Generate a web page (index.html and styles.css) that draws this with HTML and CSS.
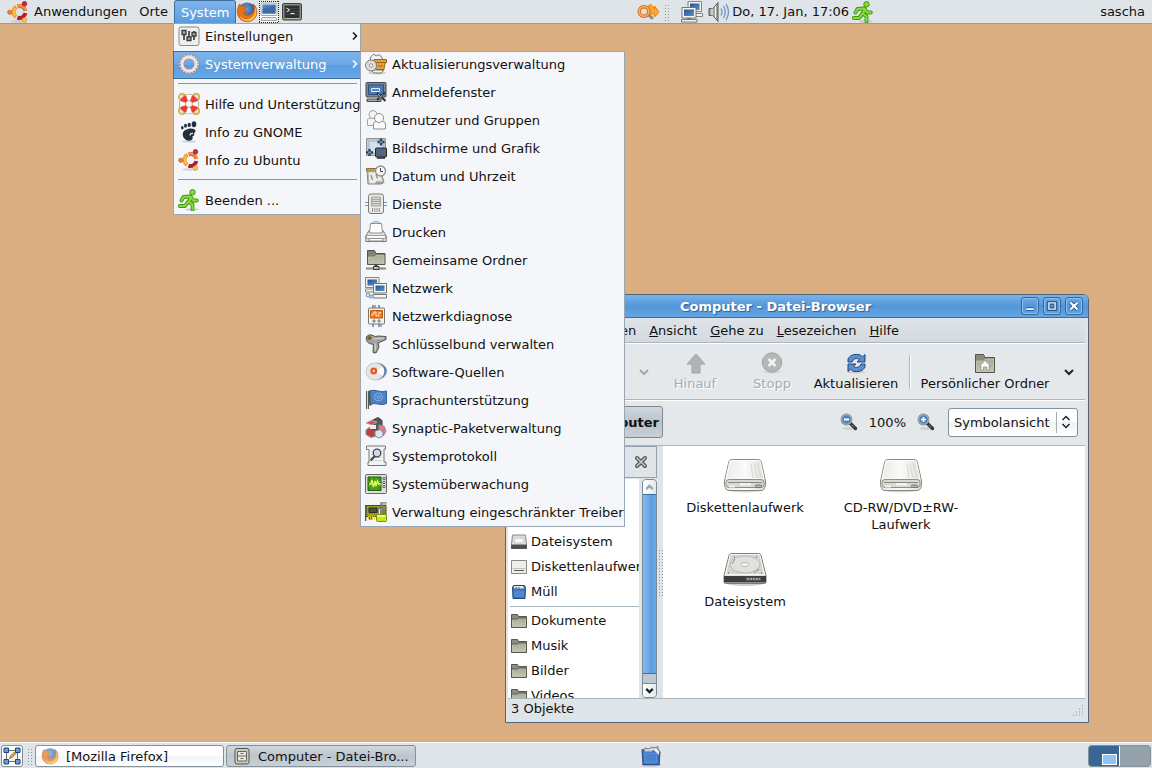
FILE: index.html
```html
<!DOCTYPE html>
<html lang="de">

<head>
    <meta charset="UTF-8">
    <meta name="viewport" content="width=device-width, initial-scale=1.0">
    <title>Desktop</title>
    <link rel="stylesheet" href="styles.css">
</head>

<body>
    <!-- Shared icons and gradients -->
    <svg class="defs" width="0" height="0" aria-hidden="true">
        <defs>
            <linearGradient id="gScreen" x1="0" y1="0" x2="1" y2="1">
                <stop offset="0" stop-color="#24508f" />
                <stop offset="1" stop-color="#5f8fca" />
            </linearGradient>
            <linearGradient id="gDrive" x1="0" y1="0" x2="1" y2="0">
                <stop offset="0" stop-color="#e9eae6" />
                <stop offset="0.5" stop-color="#fbfbfa" />
                <stop offset="1" stop-color="#dcddd8" />
            </linearGradient>
            <linearGradient id="gFolder" x1="0" y1="0" x2="0" y2="1">
                <stop offset="0" stop-color="#a9ac98" />
                <stop offset="1" stop-color="#c2c4b2" />
            </linearGradient>
            <radialGradient id="gFox" cx="0.4" cy="0.35" r="0.7">
                <stop offset="0" stop-color="#6fa8e4" />
                <stop offset="1" stop-color="#163a7c" />
            </radialGradient>
        </defs>
        <symbol id="ubuntu" viewBox="0 0 22 22">
            <ellipse cx="12" cy="20.500" rx="8" ry="1.200" fill="#b9b9b9" opacity="0.6" />
            <g fill="none" stroke-width="4">
                <path d="M10.400 5.400A6 6 0 0 1 18.400 10" stroke="#e8742a" />
                <path d="M18.400 12A6 6 0 0 1 10.400 16.600" stroke="#b81c2c" />
                <path d="M9.100 15.900A6 6 0 0 1 9.500 5.800" stroke="#f0a32c" />
            </g>
            <path d="M10.800 4.700A6.800 6.800 0 0 1 19 9.500" fill="none" stroke="#f7b277" />
            <path d="M8 15A6.800 6.800 0 0 1 8 7" fill="none" stroke="#fbd877" />
            <circle cx="2.800" cy="11.300" r="2.100" fill="#ef8040" stroke="#c85614" stroke-width="0.700" />
            <circle cx="17.500" cy="2.800" r="2.300" fill="#c62840" stroke="#99142b" stroke-width="0.700" />
            <circle cx="17.500" cy="19" r="2.300" fill="#f7c64e" stroke="#d39318" stroke-width="0.700" />
        </symbol>
        <symbol id="firefox" viewBox="0 0 22 22">
            <circle cx="11" cy="11" r="9.500" fill="url(#gFox)" />
            <path d="M3.500 3c-2.500 4-3 9-1 12.500 2.500 5 9 6.500 13.500 4 5-2.800 6.200-9 3.500-14-.7-1.200-1.500-1.800-2.500-2.500 1 2 1.300 3.500 1 5-.3 3-2 5.500-5 6-3 .5-5-.6-5.500-2.500 1.500.2 2.700-.3 3.500-1.500-1.500-.3-2.600-1-2.500-2.500l2-1.500c-1.500-1-3-1-4-.5z" fill="#e8701a" stroke="#b4470b" stroke-width="0.600" />
            <path d="M18.500 5.500c2 5-.5 11-6 12.500-3.500.8-7-.5-9-3.500 2 6 10 7.500 14 3.500 3.500-3.500 3.700-9 1-12.500z" fill="#fbc23a" />
        </symbol>
        <symbol id="runner" viewBox="0 0 22 22">
            <ellipse cx="14" cy="20.500" rx="7" ry="1.200" fill="#b5bbb5" opacity="0.700" />
            <g fill="none" stroke-linecap="round" stroke-linejoin="round">
                <path d="M12.500 7.500L11 13M11.500 7.500L5.500 8 3.500 11.500M13 8l1.800 3.500h4M10.500 12.500L7 17H1.800M11 12.500l3.500 3V20.500" stroke="#3f9410" stroke-width="3.800" />
                <path d="M12.500 7.500L11 13M11.500 7.500L5.500 8 3.500 11.500M13 8l1.800 3.500h4M10.500 12.500L7 17H1.800M11 12.500l3.500 3V20.500" stroke="#86dc3a" stroke-width="2" />
            </g>
            <circle cx="14.500" cy="3.300" r="2.700" fill="#86dc3a" stroke="#3f9410" />
        </symbol>
        <symbol id="screens" viewBox="0 0 22 22">
            <path d="M7 .5h13.500v10H7zM10 12.500h11.500v3H10z" fill="#f1f1ee" stroke="#84867f" />
            <path d="M9 2.500h9.500V9H9z" fill="url(#gScreen)" />
            <path d="M1 6.500h14v10.500H1zM.5 18.500h15.500v2.500H.5z" fill="#f6f6f4" stroke="#74766f" />
            <path d="M3 8.500h10V15H3z" fill="url(#gScreen)" />
            <path d="M6 17.500h4" stroke="#74766f" />
        </symbol>
        <symbol id="folder" viewBox="0 0 16 16">
            <path d="M.5 14.500V1.500h6l1 2h8v11z" fill="#8b8e7a" stroke="#55574c" />
            <path d="M1.500 13.500v-7h5l1.500-1h6.500v8z" fill="url(#gFolder)" stroke="#d6d8ca" stroke-width="0.600" />
            <path d="M1 6h5.500l1.200-1H15" fill="none" stroke="#55574c" />
        </symbol>
        <symbol id="drive" viewBox="0 0 48 48">
            <path d="M4 38c2 4.500 38 4.500 40 0z" fill="#d5d6d3" />
            <path d="M7.500 12c.6-2.600 1.500-3.500 4-3.500h25c2.500 0 3.400.9 4 3.500l4 18c.5 5.500-1 9.500-4.500 9.500H8c-3.500 0-5-4-4.500-9.500z" fill="url(#gDrive)" stroke="#878983" />
            <path d="M8.500 12c.5-2 1-2.500 3-2.500h25c2 0 2.500.5 3 2.500l3.500 16H5z" fill="none" stroke="#fff" />
            <path d="M33 13l3 14M30 13l2 14M36 12l4 15" stroke="#d5dbd0" fill="none" />
            <rect x="5" y="28.500" width="38" height="8" rx="3" fill="#d7dad2" stroke="#8b8e86" />
            <path d="M7 31.500h34" stroke="#85887f" />
            <path d="M19 32h11v2.500H19zM8 34.500h6v2H8z" fill="#f2f3f0" />
            <rect x="34.500" y="34" width="6" height="2.500" rx="1" fill="#b4b9b0" stroke="#74776f" />
        </symbol>
        <symbol id="zoomglass" viewBox="0 0 18 18">
            <ellipse cx="9" cy="15.500" rx="7" ry="1.500" fill="#cdd0d2" />
            <path d="M10.500 10.500l5 5" stroke="#33352f" stroke-width="3.200" stroke-linecap="round" />
            <path d="M12 12l3 3" stroke="#8a8c86" stroke-width="1.200" stroke-dasharray="1 1" />
            <circle cx="6.500" cy="6.500" r="5" fill="#4b83c4" stroke="#80827c" stroke-width="1.800" />
            <circle cx="6.500" cy="6.500" r="4.800" fill="none" stroke="#d9dad6" stroke-width="0.600" />
        </symbol>
        <symbol id="trash" viewBox="0 0 22 22">
            <ellipse cx="11" cy="20" rx="10" ry="1.600" fill="#a9afb3" />
            <path d="M3 6l2-3 4 1 3-2 2 1 4-1.500v3l2 3z" fill="#d3d7d8" stroke="#777a75" />
            <path d="M2 4.500l2.500 1h9l3-2 3.500 3-.8 13H3z" fill="#3871bd" stroke="#234c8a" />
            <path d="M4.500 8h12.500l-.5 10H5z" fill="#4a83cd" stroke="#6e9fde" stroke-width="0.700" />
            <path d="M4.500 5.500h8" stroke="#c9d3dd" stroke-width="2" />
            <path d="M13 5l3-2 3.500 3.500-1 3.500c-1-2-3-4-5.500-5z" fill="#f3f5f7" />
        </symbol>
    </svg>

    <header class="panel panel-top">
        <nav class="panel-menus">
            <button class="panel-menu apps"><svg class="icon22"><use href="#ubuntu" /></svg>Anwendungen</button>
            <button class="panel-menu">Orte</button>
            <button class="panel-menu open" aria-expanded="true">System</button>
        </nav>
        <div class="launchers">
            <button aria-label="Firefox"><svg class="icon22"><use href="#firefox" /></svg></button>
            <button aria-label="Bildschirm">
                <svg class="icon22" viewBox="0 0 22 22">
                    <path d="M1.500 .5h19v21h-19z" fill="#fff" />
                    <path d="M1 .5h20M1 21.500h20M1.500 0v22M20.500 0v22" stroke="#222" stroke-dasharray="1 1" />
                    <rect x="3" y="2" width="16" height="12.500" rx="1" fill="#f3f3f1" stroke="#a4a6a0" />
                    <rect x="4.500" y="3.500" width="13" height="9" fill="#5583bf" />
                    <path d="M4.500 12.500V8l13-4v8.500z" fill="#3c6bac" />
                    <path d="M4 16.500h14l1 3H3z" fill="#eaebe8" stroke="#a4a6a0" />
                </svg>
            </button>
            <button aria-label="Terminal">
                <svg class="icon22" viewBox="0 0 22 22">
                    <rect x="1.500" y="2.500" width="19" height="16.500" rx="1.500" fill="#8b8d87" stroke="#3e403c" />
                    <rect x="3.500" y="4.500" width="15" height="12.500" fill="#2f312e" />
                    <path d="M4 7.500h14M4 10.500h14M4 13.500h14" stroke="#454844" />
                    <path d="M5.500 7l3 2-3 2M9.500 12.500h4" fill="none" stroke="#f2f2f0" />
                    <path d="M3 17.500h16" stroke="#b8bab4" />
                    <path d="M3 17.500h2" stroke="#58c71c" stroke-width="1.500" />
                </svg>
            </button>
        </div>
        <div class="tray">
            <svg class="icon22" viewBox="0 0 22 22">
                <path d="M11 9V5l3-1.500 3.500 4.500v-3l4.500 6-4.500 5v-3h-5z" fill="#f8a833" stroke="#e67e12" />
                <path d="M11 13.500l4 3.500" stroke="#8d8f8a" stroke-width="3" stroke-linecap="round" />
                <circle cx="7" cy="10.500" r="4.800" fill="#f3dcc6" stroke="#c4661c" stroke-width="3.400" />
                <circle cx="7" cy="10.500" r="4.800" fill="none" stroke="#fbb062" stroke-width="1.800" />
            </svg>
            <span class="grip"></span>
            <svg class="icon22 net"><use href="#screens" /></svg>
            <svg class="icon22 sound" viewBox="0 0 22 22">
                <path d="M1 7.500h4L10 1.500v19L5 14.500H1z" fill="#a5a7a2" stroke="#555752" />
                <path d="M4 7.500v7M7.500 5v12" stroke="#f4f4f2" />
                <path d="M13 7.500q2 3.500 0 7M15.500 5q3.500 6 0 12M18 3q5 8 0 16" fill="none" stroke="#6c93c7" stroke-width="1.300" />
            </svg>
            <time>Do, 17. Jan, 17:06</time>
            <button aria-label="Beenden"><svg class="icon22"><use href="#runner" /></svg></button>
        </div>
        <span class="user">sascha</span>
    </header>

    <main class="desktop">
        <section class="window">
            <div class="titlebar">
                <h1>Computer - Datei-Browser</h1>
                <div class="window-buttons">
                    <button aria-label="Minimieren"><svg viewBox="0 0 18 18"><path d="M5 12.500h8" stroke="#285a8f" stroke-width="4" /><path d="M5 12.500h8" stroke="#fff" stroke-width="2" /></svg></button>
                    <button aria-label="Maximieren"><svg viewBox="0 0 18 18"><path d="M5.500 5.500h7v7h-7z" fill="none" stroke="#285a8f" stroke-width="4" /><path d="M5.500 5.500h7v7h-7z" fill="none" stroke="#e4effa" stroke-width="1.600" /></svg></button>
                    <button aria-label="Schließen"><svg viewBox="0 0 18 18"><path d="M5 5l8 8M13 5l-8 8" stroke="#285a8f" stroke-width="4.400" /><path d="M5 5l8 8M13 5l-8 8" stroke="#fff" stroke-width="2.400" /></svg></button>
                </div>
            </div>

            <nav class="menubar">
                <a href="#"><u>D</u>atei</a>
                <a href="#"><u>B</u>earbeiten</a>
                <a href="#"><u>A</u>nsicht</a>
                <a href="#"><u>G</u>ehe zu</a>
                <a href="#"><u>L</u>esezeichen</a>
                <a href="#"><u>H</u>ilfe</a>
            </nav>

            <div class="toolbar">
                <button class="tool back" disabled><svg class="icon22" viewBox="0 0 22 22"><path d="M1 11l9-9v5h10v8H10v5z" fill="#b4b7b9" /></svg>Zurück</button>
                <button class="drop" aria-label="Zurück-Verlauf" disabled><svg viewBox="0 0 12 12"><path d="M2 4l4 4 4-4" /></svg></button>
                <button class="tool forward" disabled><svg class="icon22" viewBox="0 0 22 22"><path d="M21 11l-9-9v5H2v8h10v5z" fill="#b4b7b9" /></svg>Vor</button>
                <button class="drop" aria-label="Vor-Verlauf" disabled><svg viewBox="0 0 12 12"><path d="M2 4l4 4 4-4" /></svg></button>
                <button class="tool up" disabled><svg class="icon22" viewBox="0 0 22 22"><path d="M12 2l9 10h-5v9H8v-9H3z" fill="#b1b3b4" stroke="#a0a3a5" /></svg>Hinauf</button>
                <button class="tool stop" disabled>
                    <svg class="icon22" viewBox="0 0 22 22">
                        <ellipse cx="11" cy="20" rx="9" ry="1.500" fill="#d2d6d9" />
                        <circle cx="11" cy="10.500" r="9.700" fill="#b5b6b6" stroke="#a2a4a5" />
                        <path d="M7.500 7l7 7M14.500 7l-7 7" stroke="#f3f4f5" stroke-width="2.600" />
                    </svg>Stopp
                </button>
                <button class="tool reload">
                    <svg class="icon22" viewBox="0 0 22 22">
                        <ellipse cx="11" cy="20" rx="9" ry="1.500" fill="#ccd0d3" />
                        <path d="M3 10V7c2-4 6-5 10-4.500 2 .2 3.500 1 4.500 2.200L20 2.500V10h-8l2.500-2.500c-3-1.800-6-1-7.500 2.500z" fill="#5c8fcc" stroke="#1f4581" />
                        <path d="M20 12v3c-2 4-6 5-10 4.500-2-.2-3.500-1-4.500-2.200L3 19.500V12h8l-2.500 2.500c3 1.800 6 1 7.500-2.500z" fill="#5c8fcc" stroke="#1f4581" />
                    </svg>Aktualisieren
                </button>
                <span class="tool-separator"></span>
                <button class="tool home">
                    <svg class="icon22" viewBox="0 0 22 22">
                        <path d="M1.500 20.500V2.500h8l1.500 3h9.500v15z" fill="#888b77" stroke="#55574c" />
                        <path d="M2.500 19.500V9h7l2-2h8v12.500z" fill="url(#gFolder)" stroke="#d6d8ca" stroke-width="0.600" />
                        <path d="M11 8.500l5.500 5.500H15v4h-2.500v-3h-3v3H7v-4H5.500z" fill="#fbfbf9" stroke="#7c7f6c" stroke-width="0.600" />
                    </svg>Persönlicher Ordner
                </button>
                <button class="drop more" aria-label="Mehr"><svg viewBox="0 0 12 12"><path d="M2 4l4 4 4-4" /></svg></button>
            </div>

            <div class="locationbar">
                <div class="pathbar">
                    <button class="edit" aria-label="Adresse eingeben"></button>
                    <button class="path">Computer</button>
                </div>
                <button class="zoom" aria-label="Verkleinern"><svg viewBox="0 0 18 18"><use href="#zoomglass" /><path d="M4 6.500h5" stroke="#fff" stroke-width="2" /></svg></button>
                <span class="zoom-level">100%</span>
                <button class="zoom" aria-label="Vergrößern"><svg viewBox="0 0 18 18"><use href="#zoomglass" /><path d="M4 6.500h5M6.500 4v5" stroke="#fff" stroke-width="1.600" /></svg></button>
                <div class="view-select">
                    <select aria-label="Ansicht">
                        <option>Symbolansicht</option>
                        <option>Listenansicht</option>
                    </select>
                    <svg viewBox="0 0 12 14"><path d="M2.500 5L6 1.500 9.500 5M2.500 9L6 12.500 9.500 9" fill="none" stroke="#222" stroke-width="1.500" /></svg>
                </div>
            </div>

            <div class="browser">
                <aside class="sidebar">
                    <div class="sidebar-head">
                        <button aria-label="Seitenleiste schließen"><svg viewBox="0 0 14 14"><path d="M3 3l8 8M11 3l-8 8" stroke="#55585a" stroke-width="4" stroke-linecap="round" /><path d="M3 3l8 8M11 3l-8 8" stroke="#c6c9cb" stroke-width="1.600" stroke-linecap="round" /></svg></button>
                    </div>
                    <div class="places-wrap">
                        <ul class="places">
                            <li><svg><use href="#folder" /></svg>sascha</li>
                            <li><svg><use href="#folder" /></svg>Schreibtisch</li>
                            <li>
                                <svg viewBox="0 0 16 16"><path d="M1.500 1h13l1 9v4.500H.5V10z" fill="#dcddda" stroke="#888a85" /><ellipse cx="8" cy="6.500" rx="5" ry="2.500" fill="#f8f8f6" stroke="#b5b7b2" stroke-width="0.600" /><path d="M.5 11h15v3.500H.5z" fill="#4b4e4b" stroke="#555" /></svg>Dateisystem
                            </li>
                            <li>
                                <svg viewBox="0 0 16 16"><path d="M.5 1.500h15v13H.5z" fill="#eeefec" stroke="#888a85" /><path d="M1.500 9.500h13" stroke="#c1c3be" /><path d="M3 11.500h10" stroke="#555752" /></svg>Diskettenlaufwerk
                            </li>
                            <li><svg viewBox="0 0 16 16"><path d="M2.500 1.500h11l1 2-.5 11H2l-.5-11z" fill="#3b76c2" stroke="#1f4786" /><path d="M3 2h9l1 2.500H3z" fill="#e7eaee" /><path d="M5 5V3M8 5V3" stroke="#555" /><path d="M3 7h10v6H3z" fill="#4f88d0" /></svg>Müll</li>
                            <li class="place-separator"></li>
                            <li><svg><use href="#folder" /></svg>Dokumente</li>
                            <li><svg><use href="#folder" /></svg>Musik</li>
                            <li><svg><use href="#folder" /></svg>Bilder</li>
                            <li><svg><use href="#folder" /></svg>Videos</li>
                        </ul>
                        <div class="scrollbar">
                            <button class="scroll-up" aria-label="Nach oben"><svg viewBox="0 0 12 12"><path d="M3 7.500l3-3 3 3" stroke="#9aa5ad" /></svg></button>
                            <div class="thumb"></div>
                            <button class="scroll-down" aria-label="Nach unten"><svg viewBox="0 0 12 12"><path d="M3 4.500l3 3 3-3" stroke="#222" /></svg></button>
                        </div>
                    </div>
                </aside>
                <div class="splitter"><span class="grip"></span></div>
                <ul class="files">
                    <li><svg><use href="#drive" /></svg>Diskettenlaufwerk</li>
                    <li><svg><use href="#drive" /></svg>CD-RW/DVD±RW-<br>Laufwerk</li>
                    <li>
                        <svg viewBox="0 0 48 48">
                            <path d="M4 38c3 4 37 4 40 0z" fill="#d0d1cf" />
                            <path d="M8 10.500c.3-1.300 1-2 2.500-2h27c1.500 0 2.200.7 2.500 2l5 20v6.500c0 1-.5 1.500-1.500 1.500h-39c-1 0-1.500-.5-1.500-1.500v-6.500z" fill="#e2e3df" stroke="#7b7e78" />
                            <path d="M9 11c.2-1 .7-1.500 1.500-1.500h27c.8 0 1.300.5 1.500 1.500l4.500 18.500H4.500z" fill="#d3d5d0" stroke="#f7f7f5" />
                            <ellipse cx="24" cy="19.500" rx="15" ry="8.500" fill="#dfe1dc" stroke="#b9bcb5" />
                            <ellipse cx="24" cy="19.500" rx="4" ry="2" fill="#f7f8f5" stroke="#b5b8b0" />
                            <path d="M14 14l-3 5M33 28l5-4" stroke="#90938c" />
                            <path d="M13 12h1M35 12h1M7 28h1M40 28h1" stroke="#7a7d76" stroke-width="1.500" />
                            <path d="M3 31h42v6.500H3z" fill="#3c403d" />
                            <path d="M25 32.500h15v3H25z" fill="#5e625e" />
                            <path d="M26 34h13" stroke="#d8dad5" stroke-dasharray="2 1" />
                        </svg>Dateisystem
                    </li>
                </ul>
            </div>

            <footer class="statusbar">
                <span>3 Objekte</span>
                <svg viewBox="0 0 12 12"><path d="M10 1h1M7 4h1M10 4h1M4 7h1M7 7h1M10 7h1M1 10h1M4 10h1M7 10h1M10 10h1" stroke="#8d99a1" /></svg>
            </footer>
        </section>
    </main>

    <ul class="menu system-menu">
        <li>
            <svg class="icon22" viewBox="0 0 22 22">
                <rect x="1" y="2" width="20" height="18.500" rx="2" fill="#eeeeec" stroke="#888a85" />
                <path d="M6 6v9M11 6v9M16 6v9" stroke="#555752" stroke-width="2" />
                <path d="M4 5.500h4v4H4zM9 12h4v3.500H9zM14 7.500h4V11h-4z" fill="#a9aba6" stroke="#3c3e3a" stroke-width="1.300" />
            </svg>Einstellungen<span class="arrow"><svg viewBox="0 0 8 12"><path d="M2 2.500L5.500 6 2 9.500" /></svg></span>
        </li>
        <li class="selected">
            <svg class="icon22" viewBox="0 0 22 22">
                <circle cx="11" cy="11" r="9" fill="none" stroke="#8f8586" stroke-width="3.400" stroke-dasharray="1.700 1.440" />
                <circle cx="11" cy="11" r="7" fill="none" stroke="#a39090" stroke-width="4.200" />
                <circle cx="11" cy="11" r="7" fill="none" stroke="#f1e4e3" stroke-width="2.800" />
                <circle cx="11" cy="11" r="9" fill="none" stroke="#e6dada" stroke-width="1.800" stroke-dasharray="1.300 1.840" />
            </svg>Systemverwaltung<span class="arrow"><svg viewBox="0 0 8 12"><path d="M2 2.500L5.500 6 2 9.500" /></svg></span>
        </li>
        <li class="separator"></li>
        <li>
            <svg class="icon22" viewBox="0 0 22 22">
                <g fill="none" stroke="#b8941d" stroke-width="1.800"><circle cx="4" cy="4" r="3" /><circle cx="18" cy="4" r="3" /><circle cx="4" cy="18" r="3" /><circle cx="18" cy="18" r="3" /></g>
                <g fill="none" stroke="#f5e07a" stroke-width="0.800"><circle cx="4" cy="4" r="3" /><circle cx="18" cy="4" r="3" /><circle cx="4" cy="18" r="3" /><circle cx="18" cy="18" r="3" /></g>
                <circle cx="11" cy="11" r="6.500" fill="none" stroke="#8a8c86" stroke-width="7" />
                <circle cx="11" cy="11" r="6.500" fill="none" stroke="#fafaf9" stroke-width="5.800" />
                <path d="M4.900 8.900a6.500 6.500 0 0 1 4-4M13.100 4.900a6.500 6.500 0 0 1 4 4M17.100 13.100a6.500 6.500 0 0 1-4 4M8.900 17.100a6.500 6.500 0 0 1-4-4" fill="none" stroke="#ee3b2c" stroke-width="5.800" />
            </svg>Hilfe und Unterstützung
        </li>
        <li>
            <svg class="icon22" viewBox="0 0 22 22">
                <ellipse cx="11" cy="20.500" rx="7" ry="1" fill="#cdd1d4" />
                <g fill="#20303c"><ellipse cx="4.300" cy="6.800" rx="1.300" ry="1.700" /><ellipse cx="7.500" cy="4.800" rx="1.500" ry="2" /><ellipse cx="11.200" cy="3.900" rx="1.600" ry="2.200" /><ellipse cx="16" cy="3.300" rx="2.300" ry="3" /></g>
                <path d="M10 8c3.500-1 7 0 7.500 1.500.4 1.500-1.200 2-1.500 3.500.5 1 .2 2-.8 2-1-.2-.7 1-.5 1.800.2 2-2 3-4 2.900-3-.2-6-3-6-6.500C4.700 10.500 7 8.700 10 8z" fill="#20303c" />
                <path d="M15 12.500c-2-.5-3 .6-2.800 2" fill="none" stroke="#e8ecef" stroke-width="1.300" />
            </svg>Info zu GNOME
        </li>
        <li><svg class="icon22"><use href="#ubuntu" /></svg>Info zu Ubuntu</li>
        <li class="separator"></li>
        <li><svg class="icon22"><use href="#runner" /></svg>Beenden ...</li>
    </ul>

    <ul class="menu admin-menu">
        <li>
            <svg class="icon22" viewBox="0 0 22 22">
                <ellipse cx="12" cy="20" rx="9" ry="1.600" fill="#cfd1cc" />
                <path d="M5 5q4-6 6-2 4-3 6 2l3 3H6zM6 17h13l-3 3H9z" fill="#f2f2f0" stroke="#777974" />
                <path d="M9 6.500h12.500v3L20 10l-1 6.500h-8L9.500 10z" fill="#e6a13a" stroke="#a0651a" />
                <path d="M9 9.500h12M13 13h5" stroke="#a0651a" />
                <circle cx="6" cy="12.500" r="5.500" fill="#dcdedb" stroke="#777974" />
                <circle cx="6" cy="12.500" r="1.700" fill="#fff" stroke="#8f918c" />
            </svg>Aktualisierungsverwaltung
        </li>
        <li>
            <svg class="icon22" viewBox="0 0 22 22">
                <rect x="1" y="1.500" width="20" height="14.500" rx="1" fill="#7e878f" stroke="#454c52" />
                <rect x="3.500" y="4" width="15" height="9.500" fill="#4b7cb8" stroke="#2f5380" />
                <path d="M6.500 7.500h8v3h-8z" fill="#5a8bc6" stroke="#dfe9f4" />
                <path d="M2 18h14v2.500H2z" fill="#a5abb0" stroke="#42484d" />
                <path d="M12 12l8.500 8M20 11.500L12 19" stroke="#2f3438" stroke-width="2.200" />
                <path d="M13 13l3 3M18 13.500l-4 4" stroke="#aeb4b8" />
            </svg>Anmeldefenster
        </li>
        <li>
            <svg class="icon22" viewBox="0 0 22 22">
                <g fill="#f5f5f3" stroke="#a3a5a0"><path d="M2.500 16.500V11q0-2 3-2h6q2 0 2.500 2v5.500z" /><circle cx="8" cy="5.500" r="4" /></g>
                <g fill="#fbfbfa" stroke="#8f918c"><path d="M8.500 20v-5q0-2.500 3-2.500h6q3 0 3 2.500v5z" /><circle cx="14" cy="9" r="4.500" /></g>
            </svg>Benutzer und Gruppen
        </li>
        <li>
            <svg class="icon22" viewBox="0 0 22 22">
                <path d="M1.500 1.500h19v17h-19z" fill="#c3c8cc" stroke="#8e9397" />
                <path d="M4 4h14v12H4z" fill="#d4e0ed" stroke="#a9b6c2" />
                <path d="M16 1.500v7M12.500 5h7M4.500 12v7M1 15.500h7" stroke="#2e3f50" stroke-width="2.400" />
                <path d="M14.500 5h3M3 15.500h3" stroke="#6a93bd" stroke-width="2" />
                <rect x="10.500" y="11" width="11" height="9" rx="1" fill="#5d656c" stroke="#22272b" />
                <path d="M12.500 13.500h6.500v4h-6.500z" fill="#45699a" />
                <path d="M12 21h8" stroke="#22272b" stroke-width="1.500" />
            </svg>Bildschirme und Grafik
        </li>
        <li>
            <svg class="icon22" viewBox="0 0 22 22">
                <path d="M2 4l13-.5 4 14-3 1.500H3z" fill="#a5a69c" stroke="#83857e" />
                <path d="M1.500 3.500h13v2.500h-13z" fill="#c4a862" stroke="#86713a" />
                <path d="M3 7l12-.5 3 10.500-6-1-2 2.500H4z" fill="#ededeb" stroke="#b3b5b0" />
                <path d="M6 10l1.500 5M11 9.500l1.500 4" stroke="#8d8f8a" stroke-width="1.300" />
                <circle cx="15.500" cy="6" r="5" fill="#f7f7f6" stroke="#90928c" stroke-width="1.300" />
                <path d="M15.500 3v3.500h2.500" fill="none" stroke="#444" />
            </svg>Datum und Uhrzeit
        </li>
        <li>
            <svg class="icon22" viewBox="0 0 22 22">
                <path d="M0 9.500h22M0 12.500h22" stroke="#6e97c6" />
                <rect x="3.500" y="1" width="15" height="19.500" rx="2.500" fill="#ecedeb" stroke="#777974" />
                <path d="M6.500 4h9v9h-9z" fill="#d1d3cf" stroke="#a1a39e" />
                <path d="M7 6.500h8M7 8.500h8M7 10.500h8" stroke="#a8aaa5" />
                <path d="M7.500 15v4M9.800 15v4M12.100 15v4M14.400 15v4" stroke="#8f918c" />
            </svg>Dienste
        </li>
        <li>
            <svg class="icon22" viewBox="0 0 22 22">
                <path d="M7 1.500q4-2 8 0" fill="none" stroke="#7aa5d8" />
                <path d="M.8 15L4 9.500h14l3.200 5.500v5.500H.8z" fill="#e6e7e4" stroke="#777974" />
                <path d="M5.500 2.500h11l1 9.500h-13z" fill="#fdfdfd" stroke="#8f918c" />
                <path d="M1.500 14.500h19v3h-19z" fill="#f8f8f7" stroke="#9c9e99" />
                <path d="M4 17.500h14v2.500H4z" fill="#fff" stroke="#898b86" />
            </svg>Drucken
        </li>
        <li>
            <svg class="icon22" viewBox="0 0 22 22">
                <path d="M2.500 15.500V1.500h7l1.500 3h9v11z" fill="#80836f" stroke="#55574c" />
                <path d="M3.500 14.500V8h6l1.500-1.500h8v8z" fill="url(#gFolder)" stroke="#d2d4c5" stroke-width="0.600" />
                <path d="M11 15v3.500" stroke="#44463f" stroke-width="3" />
                <path d="M1 19.500h20" stroke="#888a85" stroke-width="2" />
                <path d="M8.500 17.500h5.500v3H8.500z" fill="#bfc1ba" stroke="#33352f" />
            </svg>Gemeinsame Ordner
        </li>
        <li>
            <svg class="icon22" viewBox="0 0 22 22">
                <path d="M.5.500h13.500v10H.5zM.5 12h9v3h-9z" fill="#f1f1ee" stroke="#84867f" />
                <path d="M2.500 2.500H12v6H2.500z" fill="url(#gScreen)" />
                <path d="M8.500 6.500h13V16h-13zM8 17.500h13.500V21H8z" fill="#f6f6f4" stroke="#74766f" />
                <path d="M10.500 8.500h9V14h-9z" fill="url(#gScreen)" />
                <circle cx="3" cy="18" r="1.700" fill="none" stroke="#7aa5d8" stroke-width="1.300" /><path d="M5 18.500h3M4 20.500h3" stroke="#7aa5d8" stroke-width="1.300" />
            </svg>Netzwerk
        </li>
        <li>
            <svg class="icon22" viewBox="0 0 22 22">
                <path d="M8 0v3M8 19v3M14 0v3M14 19v3" stroke="#5a86c2" stroke-width="1.600" />
                <path d="M10 0v3M16 19v3" stroke="#a0629b" stroke-width="1.200" />
                <rect x="3.500" y="3" width="16" height="16" rx="1" fill="#f1f1ef" stroke="#777974" />
                <path d="M5.500 5.500h12v7.500h-12z" fill="#ee7a18" stroke="#c65a06" />
                <path d="M7 11V9h2V7h2v4h3V7.500h2" fill="none" stroke="#ffe6c4" />
                <circle cx="9" cy="16" r="1.200" fill="#bbb" stroke="#666" stroke-width="0.700" /><circle cx="14" cy="16" r="1.200" fill="#bbb" stroke="#666" stroke-width="0.700" />
            </svg>Netzwerkdiagnose
        </li>
        <li>
            <svg class="icon22" viewBox="0 0 22 22">
                <path d="M1.500 3.500q3-3 6.500-1 2 2 5 .5l8 .5v3L13 10l1 4-3 6-3-.5.500-8-4-1q-4-2-3-7z" fill="#a1a39e" stroke="#50524d" />
                <circle cx="4.500" cy="5" r="1.800" fill="#57594f" stroke="#8f7530" />
                <path d="M8 6l11-1M10 10.500l.5 7" stroke="#dcddda" />
            </svg>Schlüsselbund verwalten
        </li>
        <li>
            <svg class="icon22" viewBox="0 0 22 22">
                <path d="M12 2q9.500 1.500 9.500 8T12 19q6-4 6-9t-6-8z" fill="#5580ba" stroke="#7d8794" stroke-width="0.700" />
                <ellipse cx="10" cy="10.500" rx="9" ry="8.500" fill="#e5e6e5" stroke="#c6c8c6" />
                <path d="M10 10.500L18 6q2 4 0 8.500z" fill="#f9fafa" />
                <circle cx="8.500" cy="10" r="4" fill="#f4c4ae" />
                <circle cx="8.800" cy="10" r="2.300" fill="none" stroke="#dc5325" stroke-width="1.800" />
            </svg>Software-Quellen
        </li>
        <li>
            <svg class="icon22" viewBox="0 0 22 22">
                <path d="M2.500 2v18" stroke="#555752" stroke-width="3" />
                <path d="M2.500 2v18" stroke="#d3d5d0" />
                <path d="M4 2q5-1.500 9 0t8.500 0v12.500q-4 2-8.500.5T5 16z" fill="#4b82c5" stroke="#30609c" />
                <circle cx="13.500" cy="8" r="4" fill="none" stroke="#86afdf" /><circle cx="13.500" cy="8" r="1.500" fill="none" stroke="#86afdf" />
                <path d="M5 3v14" stroke="#4a4c48" />
            </svg>Sprachunterstützung
        </li>
        <li>
            <svg class="icon22" viewBox="0 0 22 22">
                <path d="M1 13l4-3 6 3v6l-5 1.500-5-3z" fill="#bf4040" stroke="#8d8f8b" />
                <path d="M6 4l7-3.500 4 3v8l-6 2-5-2z" fill="#55595b" stroke="#3b3e40" />
                <path d="M1 6l5-2.500L12 5l-5 3z" fill="#df4b3c" stroke="#aaa" />
                <path d="M5 8h6v4H5z" fill="#eceded" />
                <path d="M14 8l5 1 2 5-2 4-5 1z" fill="#dc7d86" stroke="#9b8f91" />
                <path d="M10 14l5-1.500 3 2.500v4l-4 2-4-2z" fill="#dfe6ef" stroke="#7e8894" />
            </svg>Synaptic-Paketverwaltung
        </li>
        <li>
            <svg class="icon22" viewBox="0 0 22 22">
                <path d="M1.500 1h19v3H19v13h2v3.500H3V17h1V4.500H1.500z" fill="#f3f3f1" stroke="#777974" />
                <path d="M6 6.500h11M6 9.500h11M6 12.500h11M6 15.500h11" stroke="#d3d5d1" />
                <path d="M5.500 15.500L10 11" stroke="#44463f" stroke-width="2.200" />
                <circle cx="12" cy="8" r="3.800" fill="#cddcee" stroke="#44484d" stroke-width="1.300" />
            </svg>Systemprotokoll
        </li>
        <li>
            <svg class="icon22" viewBox="0 0 22 22">
                <rect x="0.500" y="1.500" width="21" height="19" rx="1" fill="#dfe0dd" stroke="#666863" />
                <path d="M3 4h13v13.500H3z" fill="#3c9a12" stroke="#23560b" />
                <path d="M7 4v13.500M11 4v13.500M3 8.500h13M3 13h13" stroke="#5fb52f" stroke-width="0.800" />
                <path d="M4 11h2l1-4 1.500 7 1.500-6 1 5 1.500-5 1 3H16" fill="none" stroke="#e4ff5a" stroke-width="1.300" />
                <g fill="#fafafa" stroke="#444" stroke-width="0.900"><circle cx="19" cy="5.500" r="1.200" /><circle cx="19" cy="9.500" r="1.200" /><circle cx="19" cy="13.500" r="1.200" /></g>
            </svg>Systemüberwachung
        </li>
        <li>
            <svg class="icon22" viewBox="0 0 22 22">
                <path d="M1 4.500h20v11H7V18H4v-2.500H1z" fill="#95a021" stroke="#4b510f" />
                <path d="M.5 4v16" stroke="#53564e" stroke-width="1.600" />
                <path d="M4 7h8v4.500H4z" fill="#4b4e49" stroke="#282a27" />
                <path d="M3 16.500h8" stroke="#dfc535" stroke-width="4" stroke-dasharray="1 1" />
                <path d="M14.500 14V8q0-2 2-2V2.500h5M18.500 14V7" fill="none" stroke="#777974" stroke-width="2.400" />
                <path d="M17 3h4.500M14.500 13V8" stroke="#eeeeec" />
                <rect x="11.500" y="13.500" width="10" height="7" rx="1" fill="#c8e61e" stroke="#7a9207" />
                <path d="M12.500 15h8" stroke="#f4ff9f" stroke-width="1.500" />
            </svg>Verwaltung eingeschränkter Treiber
        </li>
    </ul>

    <footer class="panel panel-bottom">
        <button class="show-desktop" aria-label="Schreibtisch anzeigen">
            <svg viewBox="0 0 18 18">
                <path d="M3.500 3.500h11v11h-11z" fill="#f2f3ee" stroke="#6e7168" />
                <path d="M1 1h4.500v4.500H1zM12.500 1H17v4.500h-4.500zM1 12.500h4.500V17H1zM12.500 12.500H17V17h-4.500z" fill="#6f9bd1" stroke="#1f4580" />
                <path d="M6.500 11.500l1-2.500 4-4 1.500 1.500-4 4z" fill="#eba53a" stroke="#6b5230" stroke-width="0.700" />
            </svg>
        </button>
        <span class="grip"></span>
        <button class="task"><svg class="faded"><use href="#firefox" /></svg><span>[Mozilla Firefox]</span></button>
        <button class="task active">
            <svg viewBox="0 0 18 18">
                <rect x="2" y="1.500" width="14" height="15.500" rx="2" fill="#c9cbc1" stroke="#55574e" />
                <path d="M4.500 4.500h9v9.500h-9z" fill="#e8e9e2" stroke="#66685f" />
                <path d="M4.500 9h9M7.500 6.500h3M7.500 11.500h3" stroke="#66685f" />
            </svg>
            <span>Computer - Datei-Bro...</span>
        </button>
        <button class="trash" aria-label="Müll"><svg class="icon22"><use href="#trash" /></svg></button>
        <div class="pager">
            <div class="workspace current"><span class="mini"></span></div>
            <div class="workspace"></div>
        </div>
    </footer>
</body>

</html>
```
FILE: styles.css
```css
* {
    box-sizing: border-box;
}

body {
    display: flex;
    flex-direction: column;
    height: 100vh;
    margin: 0;
    overflow: hidden;
    font-family: "DejaVu Sans", Verdana, sans-serif;
    font-size: 13px;
    line-height: 17px;
    color: #111;
    background-color: #dbae82;
}

ul {
    list-style: none;
    margin: 0;
    padding: 0;
}

button,
select {
    font: inherit;
    color: inherit;
    background: none;
    border: none;
    margin: 0;
    padding: 0;
}

svg {
    display: block;
    flex: none;
}

.defs {
    position: absolute;
}

.icon22 {
    width: 22px;
    height: 22px;
}

.grip {
    flex: none;
    background-image: linear-gradient(90deg, #dfe4e8 2px, transparent 2px), linear-gradient(#dfe4e8 2px, #8d99a1 2px);
    background-size: 3px 3px;
}

/* Panels */
.panel {
    display: flex;
    align-items: center;
    flex: none;
    background-color: #dfe4e8;
}

.panel-top {
    height: 24px;
    border-bottom: 1px solid #879fac;
}

.panel-menus,
.launchers,
.tray {
    display: flex;
    align-items: center;
}

.panel-menu {
    display: flex;
    align-items: center;
    height: 23px;
    padding: 0 6px;
}

.panel-menu.apps {
    gap: 5px;
    padding-left: 7px;
}

.panel-menu.open {
    color: #fff;
    background: linear-gradient(#7fb5ec, #5a9ce0);
    border: 1px solid #3e6e9d;
    border-bottom: none;
    border-radius: 3px 3px 0 0;
    padding: 0 6px;
}

.launchers button:last-child {
    margin-left: 1px;
}

.tray {
    margin-left: auto;
    margin-right: 226px;
}

.tray .grip {
    width: 6px;
    height: 18px;
    margin: 0 12px 0 4px;
}

.tray .sound {
    margin: 0 2px 0 5px;
}

.tray time {
    margin-right: 3px;
}

.user {
    margin-right: 7px;
}

/* Menus */
.menu {
    position: absolute;
    background-color: #f4f6f9;
    box-shadow: inset 0 0 0 1px #98a7b3;
}

.system-menu {
    top: 23px;
    left: 173px;
    width: 188px;
}

.admin-menu {
    top: 51px;
    left: 360px;
    width: 265px;
}

.menu li {
    display: flex;
    align-items: center;
    gap: 5px;
    height: 28px;
    padding: 0 5px 2px;
    white-space: nowrap;
}

.menu .selected {
    color: #fff;
    background: linear-gradient(#7db4ec, #6ca7e4 50%, #5a9bdf 50%, #69a8e8);
    border: 1px solid #3e6e9d;
    padding: 0 4px 2px;
}

.menu .separator {
    height: 12px;
    padding: 0 4px 0 5px;
    align-items: flex-start;
}

.menu .separator::before {
    content: "";
    flex: 1;
    height: 1px;
    margin-top: 4px;
    background-color: #8797a4;
}

.arrow {
    margin-left: auto;
    margin-right: -3px;
}

.arrow svg {
    width: 8px;
    height: 12px;
    fill: none;
    stroke: currentColor;
    stroke-width: 1.5px;
}

/* File browser window */
.desktop {
    position: relative;
    flex: 1;
}

.window {
    position: absolute;
    top: 270px;
    left: 505px;
    display: flex;
    flex-direction: column;
    width: 584px;
    height: 429px;
    background-color: #dfe4e8;
    border: 1px solid #4f6779;
    border-radius: 6px 6px 0 0;
    overflow: hidden;
}

.titlebar {
    display: flex;
    align-items: center;
    flex: none;
    height: 23px;
    padding-right: 5px;
    background: linear-gradient(#7ab3ea, #5396d8 50%, #64a5e4);
    border-bottom: 1px solid #3a6ea4;
}

.titlebar h1 {
    flex: 1;
    margin: 0;
    padding-left: 24px;
    font-size: 13px;
    line-height: 17px;
    text-align: center;
    color: #fff;
    text-shadow: 1px 1px 1px #2c5c8f;
}

.window-buttons {
    display: flex;
    gap: 4px;
}

.window-buttons button {
    width: 18px;
    height: 18px;
    border: 1px solid #34689e;
    border-radius: 3px;
    box-shadow: inset 0 0 0 1px #8cbdec;
}

.window-buttons svg {
    width: 16px;
    height: 16px;
}

.menubar {
    display: flex;
    align-items: center;
    flex: none;
    gap: 13px;
    height: 25px;
    padding: 0 9px;
    margin: 0 3px 0 2px;
    background: linear-gradient(#dfe4e8, #d3d9de);
    border-bottom: 1px solid #a9b7c1;
}

.menubar a {
    color: inherit;
    text-decoration: none;
}

.toolbar,
.locationbar {
    display: flex;
    align-items: center;
    flex: none;
    margin: 0 3px 0 2px;
    background-color: #e4e8eb;
    border-top: 1px solid #fff;
    border-bottom: 1px solid #a9b7c1;
}

.toolbar {
    height: 57px;
}

.locationbar {
    height: 46px;
    padding: 0 7px 2px 0;
}

.tool {
    display: flex;
    flex-direction: column;
    align-items: center;
    gap: 1px;
    white-space: nowrap;
}

.tool:disabled {
    color: #a3adb5;
    text-shadow: 1px 1px 0 #fff;
}

.back {
    width: 60px;
}

.forward {
    width: 46px;
}

.up {
    width: 82px;
}

.stop {
    width: 72px;
}

.reload {
    width: 96px;
}

.home {
    width: 140px;
}

.tool-separator {
    width: 2px;
    height: 34px;
    margin: 0 4px 0 5px;
    border-left: 1px solid #a9b7c1;
    border-right: 1px solid #fff;
}

.drop {
    width: 20px;
    display: flex;
    justify-content: center;
}

.drop.more {
    margin-left: auto;
    margin-right: 6px;
}

.drop svg {
    width: 12px;
    height: 12px;
    fill: none;
    stroke: #222;
    stroke-width: 2px;
}

.drop:disabled svg {
    stroke: #9ba8b1;
}

.pathbar {
    display: flex;
    gap: 4px;
    width: 155px;
    margin-right: auto;
}

.pathbar button {
    height: 32px;
    border: 1px solid #7b8894;
    border-radius: 3px;
}

.pathbar .edit {
    width: 32px;
}

.pathbar .path {
    flex: 1;
    padding-right: 3px;
    font-weight: bold;
    text-align: right;
    background: linear-gradient(#d2d8de, #b9c2cb 50%, #c8d0d7);
}

.zoom svg {
    width: 18px;
    height: 18px;
}

.zoom-level {
    margin: 0 11px;
}

.view-select {
    position: relative;
    margin-left: 13px;
}

.view-select select {
    appearance: none;
    width: 130px;
    height: 29px;
    padding-left: 5px;
    background: linear-gradient(#fff 50%, #f0f2f4 50%, #fff);
    border: 1px solid #84919b;
    border-radius: 3px;
}

.view-select svg {
    position: absolute;
    top: 7px;
    right: 6px;
    width: 12px;
    height: 14px;
    pointer-events: none;
}

.view-select::after {
    content: "";
    position: absolute;
    top: 4px;
    right: 21px;
    width: 1px;
    height: 21px;
    background-color: #a5afb6;
}

.browser {
    display: flex;
    flex: 1;
    min-height: 0;
    margin: 0 3px 0 2px;
}

.sidebar {
    display: flex;
    flex-direction: column;
    width: 149px;
}

.sidebar-head {
    display: flex;
    align-items: center;
    justify-content: flex-end;
    flex: none;
    height: 32px;
    padding-right: 8px;
    border: 1px solid #93a2ae;
}

.sidebar-head svg {
    width: 14px;
    height: 14px;
}

.places-wrap {
    display: flex;
    flex: 1;
    min-height: 0;
    gap: 3px;
    padding-top: 1px;
}

.places {
    flex: 1;
    min-width: 0;
    overflow: hidden;
    background-color: #fff;
}

.places li {
    display: flex;
    align-items: center;
    gap: 4px;
    height: 25px;
    padding-left: 3px;
    white-space: nowrap;
}

.places svg {
    width: 16px;
    height: 16px;
}

.places .place-separator {
    height: 4px;
    padding: 0;
}

.place-separator::before {
    content: "";
    flex: 1;
    height: 1px;
    margin-left: 2px;
    background-color: #a9b7c1;
}

.scrollbar {
    display: flex;
    flex-direction: column;
    width: 15px;
    background-color: #bfc8d0;
    border: 1px solid #7b8a96;
    border-radius: 4px;
    overflow: hidden;
}

.scrollbar button {
    flex: none;
    height: 14px;
    background: linear-gradient(90deg, #fff, #e4e8eb);
}

.scrollbar .scroll-down {
    border-top: 1px solid #7b8a96;
}

.scrollbar svg {
    width: 13px;
    height: 13px;
    fill: none;
    stroke-width: 2px;
}

.thumb {
    flex: 1;
    margin: 0 -1px 9px;
    background: linear-gradient(90deg, #86baf0, #6aa7e6 50%, #5a9bdf 50%, #69a8e8);
    border: 1px solid #3a6ea4;
}

.splitter {
    display: flex;
    align-items: center;
    justify-content: center;
    width: 6px;
}

.splitter .grip {
    width: 6px;
    height: 48px;
}

.files {
    display: grid;
    grid-template-columns: repeat(auto-fill, 156px);
    align-content: start;
    gap: 12px 0;
    flex: 1;
    padding: 5px 4px 0;
    background-color: #fff;
}

.files li {
    text-align: center;
}

.files svg {
    width: 48px;
    height: 48px;
    margin: 0 auto;
}

.statusbar {
    display: flex;
    justify-content: space-between;
    align-items: flex-end;
    flex: none;
    height: 24px;
    margin: 0 3px 0 2px;
    padding: 0 1px 5px 3px;
    border-top: 1px solid #a9b7c1;
}

.statusbar svg {
    width: 12px;
    height: 12px;
}

/* Bottom panel */
.panel-bottom {
    height: 26px;
    padding: 1px 1px 0;
    border-top: 1px solid #fff;
}

.show-desktop,
.task {
    display: flex;
    align-items: center;
    height: 22px;
    background: linear-gradient(#fff 50%, #f2f4f5 50%, #fff);
    border: 1px solid #84919b;
    border-radius: 3px;
}

.show-desktop {
    width: 22px;
    justify-content: center;
}

.show-desktop svg,
.task svg {
    width: 18px;
    height: 18px;
}

.panel-bottom .grip {
    width: 6px;
    height: 18px;
    margin: 0 3px;
}

.task {
    gap: 7px;
    width: 189px;
    margin-right: 2px;
    padding: 0 5px;
}

.task span {
    white-space: nowrap;
}

.task .faded {
    opacity: 0.7;
}

.task.active {
    width: 190px;
    padding: 0 2px 0 6px;
    background: linear-gradient(#d0d7dd, #bcc5cd 50%, #c8d0d7);
}

.trash {
    margin-left: 222px;
}

.pager {
    display: flex;
    width: 63px;
    height: 22px;
    margin-left: auto;
    border: 1px solid #84919b;
    border-radius: 3px;
    overflow: hidden;
}

.workspace {
    display: flex;
    align-items: flex-end;
    justify-content: flex-end;
    width: 50%;
    background-color: #94a0aa;
}

.workspace.current {
    padding: 0 2px 1px;
    background-color: #396795;
    border-right: 1px solid #fff;
}

.mini {
    width: 15px;
    height: 11px;
    background-color: #91c3f5;
    border: 1px solid #fff;
}
```
